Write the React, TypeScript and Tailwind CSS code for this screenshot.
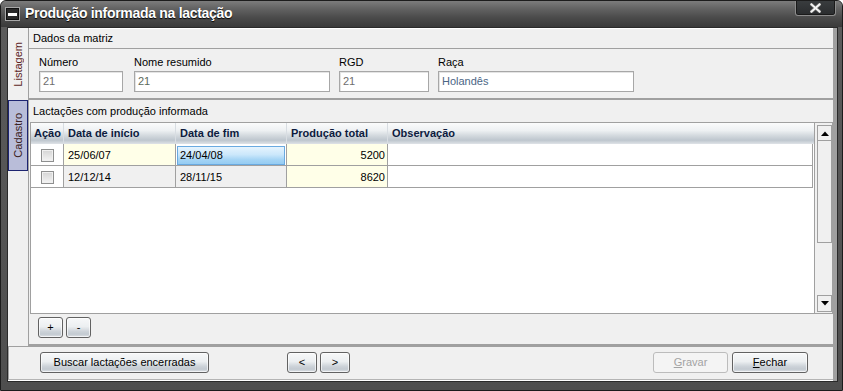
import React from "react";

const btn =
  "h-[21px] flex items-center justify-center rounded-[3px] border border-[#626262] bg-[linear-gradient(to_bottom,#f7f8f9_0%,#eceff1_45%,#cdd3d9_70%,#c3cad1_85%,#dde1e5_100%)] shadow-[inset_0_0_0_1px_rgba(255,255,255,0.65)] text-[11px] text-black leading-none";

function Checkbox() {
  return (
    <div className="w-[13px] h-[13px] border border-[#8e8f8f] bg-[linear-gradient(to_bottom,#d4d4d4,#f4f4f4)] shadow-[inset_0_0_0_1px_#f0f0f0]" />
  );
}

function Field({ label, value, w, ml, color }: { label: string; value: string; w: number; ml: string; color: string }) {
  return (
    <div className={`flex flex-col ${ml}`} style={{ width: w }}>
      <div className="h-[15px] leading-[15px] text-[11px] text-black">{label}</div>
      <div
        className={`mt-[1px] h-[21px] border border-[#a7a7a7] bg-white shadow-[inset_1px_1px_0_#e4e4e4] pl-[3px] leading-[19px] text-[11px] ${color}`}
      >
        {value}
      </div>
    </div>
  );
}

export default function App() {
  return (
    <div className="w-[843px] h-[391px] bg-white">
      <div className="w-[843px] h-[391px] flex flex-col bg-[linear-gradient(to_bottom,#5c5c5c,#4e4e4e)] border border-[#1c1c1c] rounded-t-[6px] overflow-hidden font-['Liberation_Sans',Arial,sans-serif] text-[11px] text-black">
        {/* Title bar */}
        <div className="h-[26px] shrink-0 flex items-start bg-[linear-gradient(to_bottom,#7c7c7c_0%,#626262_30%,#4a4a4a_65%,#3a3a3a_100%)]">
          <div className="ml-[4px] mt-[6px] w-[15px] h-[14px] border border-[#a8a8a8] bg-[#2a2a2a] flex items-center justify-center shadow-[inset_0_0_0_1px_#111]">
            <div className="w-[9px] h-[3px] bg-white" />
          </div>
          <div className="ml-[5px] mt-[3px] leading-[18px] text-[14px] font-bold text-white tracking-[-0.3px] [text-shadow:0_1px_1px_#000]">
            Produção informada na lactação
          </div>
          <div className="ml-auto mr-[6px] -mt-[1px] w-[41px] h-[16px] rounded-b-[3px] border border-t-0 border-[#8c8c8c] bg-[linear-gradient(to_bottom,#3a3d3f,#2a2c2e)] flex items-center justify-center shadow-[inset_0_0_0_1px_#1a1a1a]">
            <svg width="11" height="10" viewBox="0 0 11 10">
              <path d="M1.5 1.5 L9.5 8.5 M9.5 1.5 L1.5 8.5" stroke="#666" strokeWidth="3.6" strokeLinecap="square" />
              <path d="M1.5 1.5 L9.5 8.5 M9.5 1.5 L1.5 8.5" stroke="#f4f4f4" strokeWidth="2" strokeLinecap="square" />
            </svg>
          </div>
        </div>

        {/* Body */}
        <div className="flex-1 ml-[6px] mr-[4px] mb-[8px] border border-[#2a2a2a] bg-[#f0f0f0] flex flex-row">
          <div className="flex-1 flex flex-col">
            {/* Top region */}
            <div className="h-[319px] flex flex-row">
              {/* Tab strip */}
              <div className="w-[20px] flex flex-col border-b border-[#a0a0a0]">
                <div className="h-[72px] flex items-center justify-center">
                  <span className="[writing-mode:vertical-rl] rotate-180 text-[11px] leading-[13px] text-[#5c1f1f]">Listagem</span>
                </div>
                <div className="h-[71px] border border-[#1d2470] bg-[#b9bdd9] flex items-center justify-center">
                  <span className="[writing-mode:vertical-rl] rotate-180 text-[11px] leading-[13px] text-[#3b2222]">Cadastro</span>
                </div>
              </div>

              {/* Main panel */}
              <div className="flex-1 flex flex-col border-l border-[#a0a0a0] border-b-[3px] border-b-[#a0a0a0]">
                <div className="h-[21px] border-t border-t-white border-b border-b-[#a0a0a0] pl-[4px] leading-[19px]">
                  Dados da matriz
                </div>
                <div className="h-[51px] border-b-2 border-[#a0a0a0] pl-[10px] pt-[6px] flex flex-row">
                  <Field label="Número" value="21" w={84} ml="" color="text-[#6e6e6e]" />
                  <Field label="Nome resumido" value="21" w={196} ml="ml-[11px]" color="text-[#5c6a5c]" />
                  <Field label="RGD" value="21" w={90} ml="ml-[9px]" color="text-[#6e6e6e]" />
                  <Field label="Raça" value="Holandês" w={196} ml="ml-[9px]" color="text-[#4b6685]" />
                </div>
                <div className="h-[22px] pl-[4px] leading-[22px]">Lactações com produção informada</div>

                {/* Grid */}
                <div className="ml-[1px] h-[192px] border border-[#a0a0a0] bg-white flex flex-row">
                  <div className="w-[783px] flex flex-col">
                    <div className="h-[21px] flex flex-row bg-[linear-gradient(to_bottom,#fbfcfc_0%,#eef1f3_35%,#d3d9de_60%,#bec6ce_82%,#dfe3e7_100%)] font-bold text-[11px] text-[#0d1b3e] leading-[21px]">
                      <div className="w-[33px] pl-[3px] border-r border-[#d8dde2]">Ação</div>
                      <div className="w-[112px] pl-[4px] border-r border-[#d8dde2]">Data de início</div>
                      <div className="w-[111px] pl-[4px] border-r border-[#d8dde2]">Data de fim</div>
                      <div className="w-[101px] pl-[4px] border-r border-[#d8dde2]">Produção total</div>
                      <div className="w-[426px] pl-[4px]">Observação</div>
                    </div>
                    {/* Row 1 */}
                    <div className="h-[22px] flex flex-row">
                      <div className="w-[33px] h-[22px] border-r border-b border-[#a0a0a0] bg-white pl-[10px] pt-[5px]">
                        <Checkbox />
                      </div>
                      <div className="w-[112px] h-[22px] border-r border-b border-[#a0a0a0] bg-[#ffffe8] pl-[4px] pt-[1px] leading-[20px]">25/06/07</div>
                      <div className="w-[111px] h-[22px] border-r border-b border-[#a0a0a0] bg-white pl-[1px] pt-[2px] pr-[1px]">
                        <div className="h-[19px] border border-[#6aaae0] bg-[linear-gradient(to_bottom,#e6f4fe_0%,#cbe7fb_45%,#a4d4f5_75%,#95ccf3_100%)] pl-[2px] leading-[17px]">
                          24/04/08
                        </div>
                      </div>
                      <div className="w-[101px] h-[22px] border-r border-b border-[#a0a0a0] bg-[#ffffe8] pr-[2px] pt-[1px] leading-[20px] text-right">5200</div>
                      <div className="w-[425px] h-[22px] border-r border-b border-[#a0a0a0] bg-white" />
                    </div>
                    {/* Row 2 */}
                    <div className="h-[22px] flex flex-row">
                      <div className="w-[33px] h-[22px] border-r border-b border-[#a0a0a0] bg-white pl-[10px] pt-[5px]">
                        <Checkbox />
                      </div>
                      <div className="w-[112px] h-[22px] border-r border-b border-[#a0a0a0] bg-[#f0f0f0] pl-[4px] pt-[1px] leading-[20px]">12/12/14</div>
                      <div className="w-[111px] h-[22px] border-r border-b border-[#a0a0a0] bg-[#f0f0f0] pl-[4px] pt-[1px] leading-[20px]">28/11/15</div>
                      <div className="w-[101px] h-[22px] border-r border-b border-[#a0a0a0] bg-[#ffffe8] pr-[2px] pt-[1px] leading-[20px] text-right">8620</div>
                      <div className="w-[425px] h-[22px] border-r border-b border-[#a0a0a0] bg-white" />
                    </div>
                  </div>
                  {/* Scrollbar */}
                  <div className="flex-1 border-l border-[#a0a0a0] bg-[#f0f0f0] flex flex-col pl-[2px] pt-[2px] pb-[1px]">
                    <div className="w-[15px] h-[16px] border border-[#a0a0a0] bg-[#f0f0f0] flex items-center justify-center">
                      <svg width="8" height="5" viewBox="0 0 8 5">
                        <path d="M0 5 L4 0.5 L8 5 Z" fill="#000" />
                      </svg>
                    </div>
                    <div className="w-[15px] h-[102px] border border-[#a0a0a0] border-t-0 bg-[#f0f0f0]" />
                    <div className="flex-1" />
                    <div className="w-[15px] h-[17px] border border-[#a0a0a0] bg-[#f0f0f0] flex items-center justify-center">
                      <svg width="8" height="5" viewBox="0 0 8 5">
                        <path d="M0 0 L8 0 L4 4.5 Z" fill="#000" />
                      </svg>
                    </div>
                  </div>
                </div>

                {/* +/- buttons */}
                <div className="flex-1 flex flex-row pl-[9px] pt-[3px] gap-[3px]">
                  <div className={`${btn} w-[25px]`}>+</div>
                  <div className={`${btn} w-[25px]`}>-</div>
                </div>
              </div>
            </div>

            {/* Bottom bar */}
            <div className="h-[33px] border-l border-l-[#a0a0a0] border-b border-b-[#b4b4b4] flex flex-row pt-[5px]">
              <div className={`${btn} ml-[31px] w-[169px]`}>Buscar lactações encerradas</div>
              <div className={`${btn} ml-[78px] w-[30px]`}>&lt;</div>
              <div className={`${btn} ml-[3px] w-[30px]`}>&gt;</div>
              <div className="flex-1" />
              <div className="h-[21px] w-[75px] flex items-center justify-center rounded-[3px] border border-[#bcbcbc] bg-[#f4f4f4] text-[11px] text-[#a3a3a3] leading-none">
                <span className="underline">G</span>ravar
              </div>
              <div className={`${btn} ml-[4px] mr-[25px] w-[76px]`}>
                <span className="underline">F</span>echar
              </div>
            </div>
            <div className="flex-1 bg-white" />
          </div>
          <div className="w-[4px] bg-[#a0a0a0]" />
        </div>
      </div>
    </div>
  );
}
